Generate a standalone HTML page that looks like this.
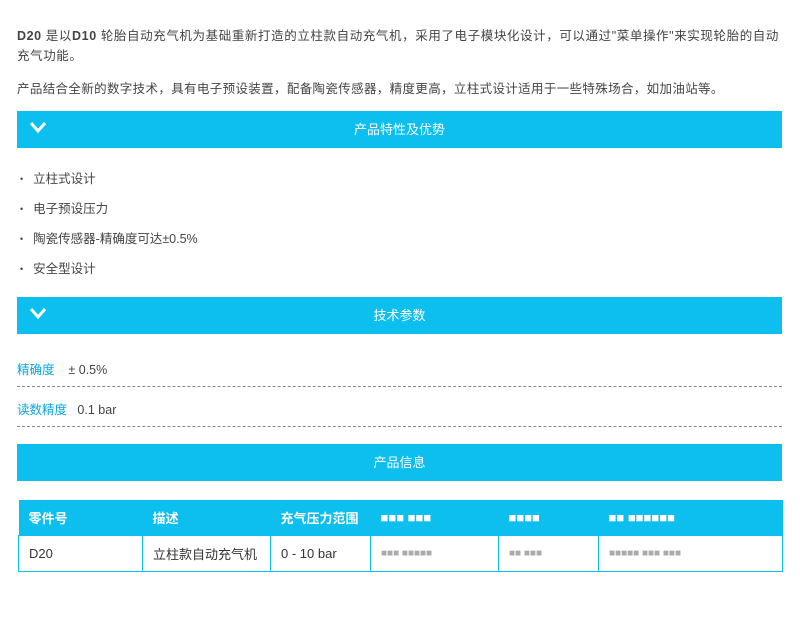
<!DOCTYPE html>
<html><head><meta charset="utf-8"><style>
body{margin:0;width:800px;height:639px;background:#fff;font-family:"Liberation Sans","Noto Sans CJK SC",sans-serif;color:#444;font-size:12.5px;position:relative;overflow:hidden}
.a{position:absolute}
p{margin:0}
.bar{position:absolute;left:17px;width:765px;height:37px;background:#0cbfef;color:#fff;text-align:center;line-height:37px;font-size:13px}
.chev{position:absolute;left:12px;top:9px}
.li{position:absolute;left:20px;font-size:12.5px}
.li:before{content:"•";margin-right:10px;font-size:9px;position:relative;top:-1px}
.dash{position:absolute;left:17px;width:765px;border-top:1px dashed #888}
table{position:absolute;left:18px;top:500px;border-collapse:collapse;width:765px;font-size:13px;table-layout:fixed}
th,td{white-space:nowrap;overflow:hidden;padding:0 10px}
th{background:#0cbfef;color:#fff;height:35px;text-align:left;font-weight:bold}
td{height:35px;border:1px solid #0cbfef;color:#333}
.bl{color:#aaa;font-size:10px}
</style></head><body>
<p class="a" style="left:17px;top:26px;width:780px;line-height:20px;white-space:nowrap;letter-spacing:0.6px"><b>D20</b> 是以<b>D10</b> 轮胎自动充气机为基础重新打造的立柱款自动充气机，采用了电子模块化设计，可以通过"菜单操作"来实现轮胎的自动<br>充气功能。</p>
<p class="a" style="left:17px;top:78px;letter-spacing:0.35px;white-space:nowrap">产品结合全新的数字技术，具有电子预设装置，配备陶瓷传感器，精度更高，立柱式设计适用于一些特殊场合，如加油站等。</p>
<div class="bar" style="top:111px"><svg class="chev" width="18" height="14"><path d="M2 3L9 11L16 3" stroke="#fff" stroke-width="3" fill="none"/></svg>产品特性及优势</div>
<div class="li" style="top:168px">立柱式设计</div>
<div class="li" style="top:198px">电子预设压力</div>
<div class="li" style="top:228px">陶瓷传感器-精确度可达±0.5%</div>
<div class="li" style="top:258px">安全型设计</div>
<div class="bar" style="top:297px"><svg class="chev" width="18" height="14"><path d="M2 3L9 11L16 3" stroke="#fff" stroke-width="3" fill="none"/></svg>技术参数</div>
<div class="a" style="left:17px;top:359px"><span style="color:#0aa8dd">精确度</span>&nbsp;&nbsp;&nbsp;&nbsp;± 0.5%</div>
<div class="dash" style="top:386px"></div>
<div class="a" style="left:17px;top:399px"><span style="color:#0aa8dd">读数精度</span>&nbsp;&nbsp;&nbsp;0.1 bar</div>
<div class="dash" style="top:426px"></div>
<div class="bar" style="top:444px">产品信息</div>
<table>
<colgroup><col style="width:124px"><col style="width:128px"><col style="width:100px"><col style="width:128px"><col style="width:100px"><col></colgroup>
<tr><th>零件号</th><th>描述</th><th>充气压力范围</th><th>■■■ ■■■</th><th>■■■■</th><th>■■ ■■■■■■</th></tr>
<tr><td>D20</td><td>立柱款自动充气机</td><td>0 - 10 bar</td><td class="bl">■■■ ■■■■■</td><td class="bl">■■ ■■■</td><td class="bl">■■■■■ ■■■ ■■■</td></tr>
</table>
</body></html>
